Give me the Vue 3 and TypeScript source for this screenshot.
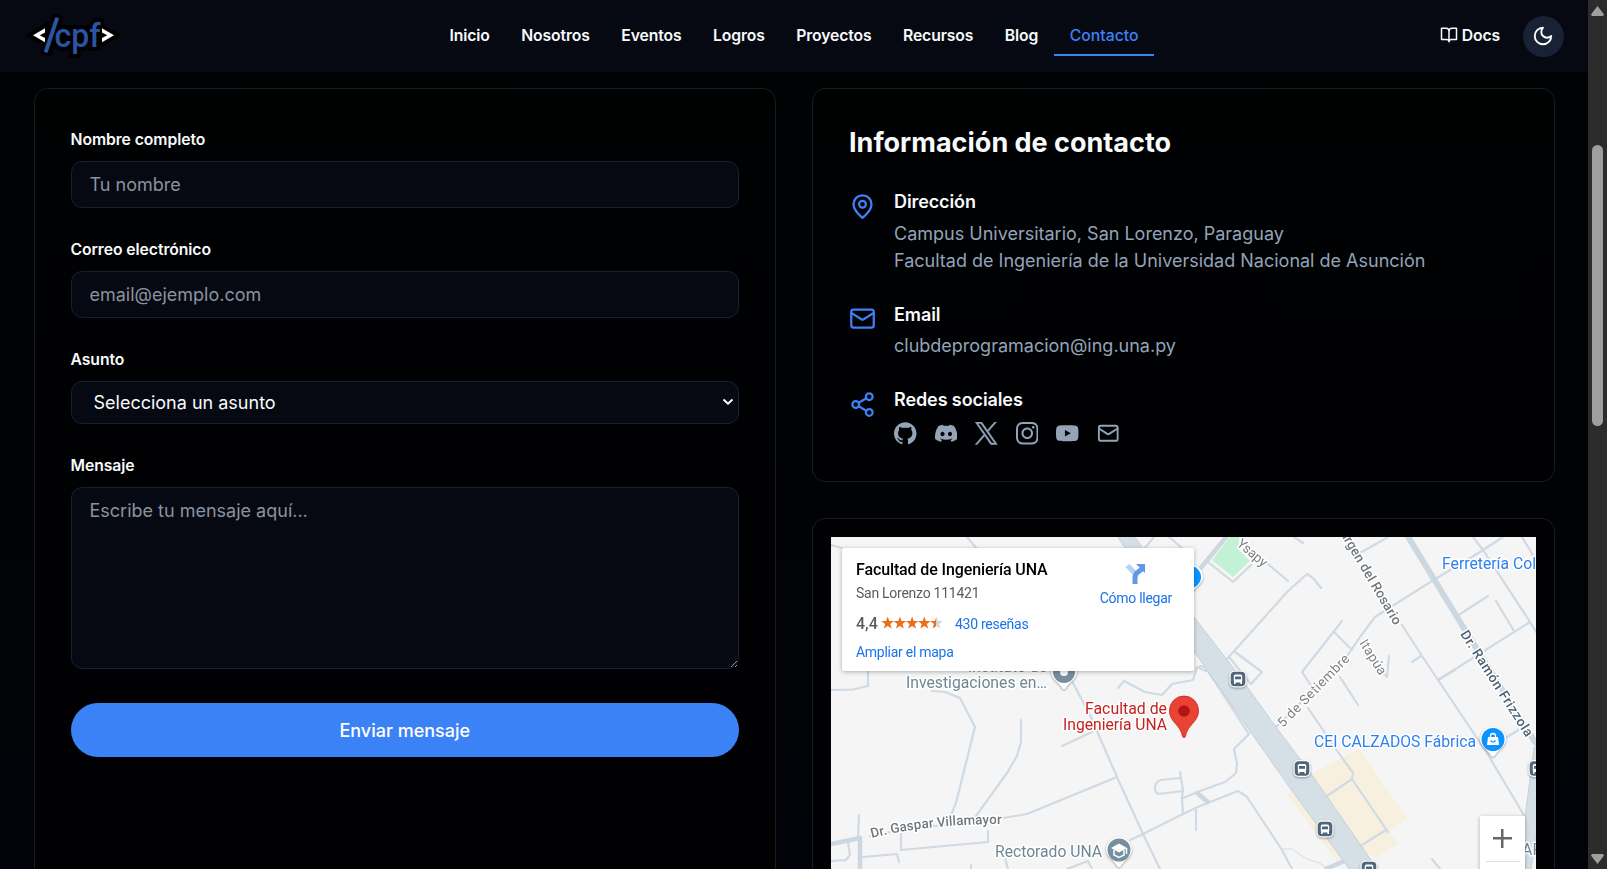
<script setup lang="ts">
import { ref } from 'vue'

interface Social {
  name: string
  path: string
}

const links: string[] = ['Inicio', 'Nosotros', 'Eventos', 'Logros', 'Proyectos', 'Recursos', 'Blog', 'Contacto']
const active = ref('Contacto')
const subject = ref('')

const socials: Social[] = [
  {
    name: 'GitHub',
    path: 'M12 .297c-6.63 0-12 5.373-12 12 0 5.303 3.438 9.8 8.205 11.385.6.113.82-.258.82-.577 0-.285-.01-1.04-.015-2.04-3.338.724-4.042-1.61-4.042-1.61C4.422 18.07 3.633 17.7 3.633 17.7c-1.087-.744.084-.729.084-.729 1.205.084 1.838 1.236 1.838 1.236 1.07 1.835 2.809 1.305 3.495.998.108-.776.417-1.305.76-1.605-2.665-.3-5.466-1.332-5.466-5.93 0-1.31.465-2.38 1.235-3.22-.135-.303-.54-1.523.105-3.176 0 0 1.005-.322 3.3 1.23.96-.267 1.98-.399 3-.405 1.02.006 2.04.138 3 .405 2.28-1.552 3.285-1.23 3.285-1.23.645 1.653.24 2.873.12 3.176.765.84 1.23 1.91 1.23 3.22 0 4.61-2.805 5.625-5.475 5.92.42.36.81 1.096.81 2.22 0 1.606-.015 2.896-.015 3.286 0 .315.21.69.825.57C20.565 22.092 24 17.592 24 12.297c0-6.627-5.373-12-12-12',
  },
  {
    name: 'Discord',
    path: 'M20.317 4.3698a19.7913 19.7913 0 00-4.8851-1.5152.0741.0741 0 00-.0785.0371c-.211.3753-.4447.8648-.6083 1.2495-1.8447-.2762-3.68-.2762-5.4868 0-.1636-.3933-.4058-.8742-.6177-1.2495a.077.077 0 00-.0785-.037 19.7363 19.7363 0 00-4.8852 1.515.0699.0699 0 00-.0321.0277C.5334 9.0458-.319 13.5799.0992 18.0578a.0824.0824 0 00.0312.0561c2.0528 1.5076 4.0413 2.4228 5.9929 3.0294a.0777.0777 0 00.0842-.0276c.4616-.6304.8731-1.2952 1.226-1.9942a.076.076 0 00-.0416-.1057c-.6528-.2476-1.2743-.5495-1.8722-.8923a.077.077 0 01-.0076-.1277c.1258-.0943.2517-.1923.3718-.2914a.0743.0743 0 01.0776-.0105c3.9278 1.7933 8.18 1.7933 12.0614 0a.0739.0739 0 01.0785.0095c.1202.099.246.1981.3728.2924a.077.077 0 01-.0066.1276 12.2986 12.2986 0 01-1.873.8914.0766.0766 0 00-.0407.1067c.3604.698.7719 1.3628 1.225 1.9932a.076.076 0 00.0842.0286c1.961-.6067 3.9495-1.5219 6.0023-3.0294a.077.077 0 00.0313-.0552c.5004-5.177-.8382-9.6739-3.5485-13.6604a.061.061 0 00-.0312-.0286zM8.02 15.3312c-1.1825 0-2.1569-1.0857-2.1569-2.419 0-1.3332.9555-2.4189 2.157-2.4189 1.2108 0 2.1757 1.0952 2.1568 2.419 0 1.3332-.9555 2.4189-2.1569 2.4189zm7.9748 0c-1.1825 0-2.1569-1.0857-2.1569-2.419 0-1.3332.9554-2.4189 2.1569-2.4189 1.2108 0 2.1757 1.0952 2.1568 2.419 0 1.3332-.946 2.4189-2.1568 2.4189Z',
  },
  {
    name: 'X',
    path: 'M14.234 10.162 22.977 0h-2.072l-7.591 8.824L7.251 0H.258l9.168 13.343L.258 24H2.33l8.016-9.318L16.749 24h6.993zm-2.837 3.299-.929-1.329L3.076 1.56h3.182l5.965 8.532.929 1.329 7.754 11.09h-3.182z',
  },
  {
    name: 'Instagram',
    path: 'M12 0C8.74 0 8.333.015 7.053.072 5.775.132 4.905.333 4.14.63c-.789.306-1.459.717-2.126 1.384S.935 3.35.63 4.14C.333 4.905.131 5.775.072 7.053.012 8.333 0 8.74 0 12s.015 3.667.072 4.947c.06 1.277.261 2.148.558 2.913.306.788.717 1.459 1.384 2.126.667.666 1.336 1.079 2.126 1.384.766.296 1.636.499 2.913.558C8.333 23.988 8.74 24 12 24s3.667-.015 4.947-.072c1.277-.06 2.148-.262 2.913-.558.788-.306 1.459-.718 2.126-1.384.666-.667 1.079-1.335 1.384-2.126.296-.765.499-1.636.558-2.913.06-1.28.072-1.687.072-4.947s-.015-3.667-.072-4.947c-.06-1.277-.262-2.149-.558-2.913-.306-.789-.718-1.459-1.384-2.126C21.319 1.347 20.651.935 19.86.63c-.765-.297-1.636-.499-2.913-.558C15.667.012 15.26 0 12 0zm0 2.16c3.203 0 3.585.016 4.85.071 1.17.055 1.805.249 2.227.415.562.217.96.477 1.382.896.419.42.679.819.896 1.381.164.422.36 1.057.413 2.227.057 1.266.07 1.646.07 4.85s-.015 3.585-.074 4.85c-.061 1.17-.256 1.805-.421 2.227-.224.562-.479.96-.899 1.382-.419.419-.824.679-1.38.896-.42.164-1.065.36-2.235.413-1.274.057-1.649.07-4.859.07-3.211 0-3.586-.015-4.859-.074-1.171-.061-1.816-.256-2.236-.421-.569-.224-.96-.479-1.379-.899-.421-.419-.69-.824-.9-1.38-.165-.42-.359-1.065-.42-2.235-.045-1.26-.061-1.649-.061-4.844 0-3.196.016-3.586.061-4.861.061-1.17.255-1.814.42-2.234.21-.57.479-.96.9-1.381.419-.419.81-.689 1.379-.898.42-.166 1.051-.361 2.221-.421 1.275-.045 1.65-.06 4.859-.06l.045.03zm0 3.678c-3.405 0-6.162 2.76-6.162 6.162 0 3.405 2.76 6.162 6.162 6.162 3.405 0 6.162-2.76 6.162-6.162 0-3.405-2.76-6.162-6.162-6.162zM12 16c-2.21 0-4-1.79-4-4s1.79-4 4-4 4 1.79 4 4-1.79 4-4 4zm7.846-10.405c0 .795-.646 1.44-1.44 1.44-.795 0-1.44-.646-1.44-1.44 0-.794.646-1.439 1.44-1.439.793-.001 1.44.645 1.44 1.439z',
  },
  {
    name: 'YouTube',
    path: 'M23.498 6.186a3.016 3.016 0 0 0-2.122-2.136C19.505 3.545 12 3.545 12 3.545s-7.505 0-9.377.505A3.017 3.017 0 0 0 .502 6.186C0 8.07 0 12 0 12s0 3.93.502 5.814a3.016 3.016 0 0 0 2.122 2.136c1.871.505 9.376.505 9.376.505s7.505 0 9.377-.505a3.015 3.015 0 0 0 2.122-2.136C24 15.93 24 12 24 12s0-3.93-.502-5.814zM9.545 15.568V8.432L15.818 12l-6.273 3.568z',
  },
]

const streets: string[] = [
  'M831 545 842 548',
  'M967 537 977 549',
  'M868 668V686L853 689.5 831 690',
  'M932 691 945 692 960 698 975 727 956 803 951 815',
  'M1021 720V742L1017 756 1007 773 976 816',
  'M870 836 901 830 1003 818 1027 814 1117 777',
  'M859 815 858 838',
  'M848 843 850 855 846 860 831 861',
  'M863 857 897 854 899 862',
  'M901 834V850L988 842V831',
  'M971 865V869',
  'M1073 683 1090 715 1117 777 1143 834 1160 869',
  'M1062 746 1092 732',
  'M1130 840 1143 834 1183 814 1200 806 1238 791 1247 797 1282 850 1292 869',
  'M1183 798 1200 791 1225 782 1236 773 1237 764 1234 749 1249 734 1243 725 1215 682 1205 667 1200 666',
  'M1180 772 1183 790 1182 798 1183 814',
  'M1180 778 1161 780Q1155 782 1155 787T1158 794L1183 791',
  'M1196 810V830',
  'M1118 688 1124 681 1145 692 1162 695 1172 684 1193 680 1197 667 1206 671',
  'M1145 548 1154 537',
  'M1169 537 1190 555',
  'M1208 562 1233 582 1251 565',
  'M1268 564 1288 581',
  'M1294 537 1303 543',
  'M1321 588 1313 578 1307 574 1288 591 1227 659',
  'M1235 652 1262 672 1251 684 1229 657',
  'M1342 621 1302 672 1314 690',
  'M1308 708 1338 752 1353 773 1352 779 1388 832',
  'M1334 632 1352 650',
  'M1503 537 1480 552 1432 581 1375 617 1360 637 1345 659 1276 727',
  'M1360 553 1388 537',
  'M1457 616 1488 596',
  'M1496 601 1514 631',
  'M1473 537 1483 550 1530 622 1536 632',
  'M1522 537 1533 555',
  'M1530 622 1438 680',
  'M1402 625 1422 656 1438 680 1487 753 1525 817',
  'M1412 662 1421 656',
  'M1389 656 1387 677 1383 673',
  'M1340 677 1358 705',
  'M1455 670 1438 680',
  'M1507 737 1520 729',
  'M1327 796 1352 779',
  'M1362 845 1386 830',
  'M1432 859 1440 869',
  'M1067 869 1088 861 1092 869',
  'M1005 858 1008 869',
]

const avenues: string[] = [
  'M831 844 860 838V869',
  'M1196 792 1209 803',
  'M1200 569 1227 536',
  'M1325 869 1352 858',
]

const busStops: [number, number][] = [
  [1238, 679],
  [1302, 768.5],
  [1325, 829],
  [1369, 869],
  [1537, 768.5],
]
</script>

<template>
  <div class="page">
    <div class="site">
      <header class="topbar">
        <svg class="logo" viewBox="0 0 100 56">
          <g class="logo-shadow">
            <path d="M19 20.300 7 27.300 19 34.300ZM76 20.300 88 27.300 76 34.300Z" />
            <path class="slash-shadow" d="M32 7 20 47" />
            <text x="28.500" y="39" textLength="46" lengthAdjust="spacingAndGlyphs">cpf</text>
          </g>
          <path class="bracket" d="M19 20.300 7 27.300 19 34.300V30L13.800 27.300 19 24.600ZM76 20.300 88 27.300 76 34.300V30L81.200 27.300 76 24.600Z" />
          <path class="slash" d="M31.200 9.700 19.600 44.300" />
          <text class="mark" x="28.500" y="39" textLength="46" lengthAdjust="spacingAndGlyphs">cpf</text>
        </svg>
        <nav class="nav">
          <a v-for="l in links" :key="l" class="nav-link" :class="{ active: l === active }" @click="active = l">{{ l }}</a>
        </nav>
        <div class="actions">
          <a class="docs">
            <svg class="line book" viewBox="0 0 24 24"><path d="M2 3h6a4 4 0 0 1 4 4v14a3 3 0 0 0-3-3H2zM22 3h-6a4 4 0 0 0-4 4v14a3 3 0 0 1 3-3h7z" /></svg>
            <span>Docs</span>
          </a>
          <button class="theme" type="button" aria-label="Tema">
            <svg class="line" viewBox="0 0 24 24"><path d="M12 3a6 6 0 0 0 9 9 9 9 0 1 1-9-9Z" /></svg>
          </button>
        </div>
      </header>

      <main class="content">
        <form class="card form" @submit.prevent>
          <div class="field">
            <label for="name">Nombre completo</label>
            <input id="name" type="text" placeholder="Tu nombre" />
          </div>
          <div class="field">
            <label for="email">Correo electrónico</label>
            <input id="email" type="email" placeholder="email@ejemplo.com" />
          </div>
          <div class="field">
            <label for="subject">Asunto</label>
            <div class="select">
              <select id="subject" v-model="subject">
                <option value="">Selecciona un asunto</option>
              </select>
              <svg class="chevron" viewBox="0 0 12 8"><path d="M1.500 1.500 6 5.700l4.500-4.200" /></svg>
            </div>
          </div>
          <div class="field message">
            <label for="message">Mensaje</label>
            <textarea id="message" placeholder="Escribe tu mensaje aquí..."></textarea>
          </div>
          <button class="submit" type="submit">Enviar mensaje</button>
        </form>

        <div class="side">
          <section class="card info">
            <h2>Información de contacto</h2>
            <div class="row">
              <svg class="line row-icon" viewBox="0 0 24 24"><path d="M20 10c0 6-8 12-8 12s-8-6-8-12a8 8 0 0 1 16 0Z" /><circle cx="12" cy="10" r="3" /></svg>
              <div>
                <h3>Dirección</h3>
                <p>Campus Universitario, San Lorenzo, Paraguay<br />Facultad de Ingeniería de la Universidad Nacional de Asunción</p>
              </div>
            </div>
            <div class="row">
              <svg class="line row-icon" viewBox="0 0 24 24"><rect x="2" y="4" width="20" height="16" rx="2" /><path d="m22 7-8.970 5.700a1.940 1.940 0 0 1-2.060 0L2 7" /></svg>
              <div>
                <h3>Email</h3>
                <p>clubdeprogramacion@ing.una.py</p>
              </div>
            </div>
            <div class="row">
              <svg class="line row-icon" viewBox="0 0 24 24"><circle cx="18" cy="5" r="3" /><circle cx="6" cy="12" r="3" /><circle cx="18" cy="19" r="3" /><path d="m8.590 13.510 6.830 3.980M15.410 6.510l-6.820 3.980" /></svg>
              <div>
                <h3>Redes sociales</h3>
                <div class="socials">
                  <svg v-for="s in socials" :key="s.name" viewBox="0 0 24 24" :class="{ heavy: s.name === 'X' }" :aria-label="s.name"><path :d="s.path" /></svg>
                  <svg class="line" viewBox="0 0 24 24"><rect x="2" y="4" width="20" height="16" rx="2" /><path d="m22 7-8.970 5.700a1.940 1.940 0 0 1-2.060 0L2 7" /></svg>
                </div>
              </div>
            </div>
          </section>

          <section class="card map-card">
            <div class="map">
              <svg class="map-canvas" viewBox="831 537 705 332">
                <defs>
                  <g id="bus">
                    <rect x="-8.500" y="-8.500" width="17" height="17" rx="5" fill="#fff" />
                    <rect x="-7.300" y="-7.300" width="14.600" height="14.600" rx="4" fill="#4f667a" />
                    <rect x="-4.200" y="-4.500" width="8.400" height="8" rx="1.500" fill="#fff" />
                    <path d="M-3-2.500H3V.3H-3Z" fill="#4f667a" />
                    <path d="M-3.200 3v2M3.200 3v2" stroke="#fff" stroke-width="1.600" />
                  </g>
                  <path id="pin" d="M0-13A13 13 0 0 1 13 0C13 7 5 10 1.500 16.500Q0 18-1.500 16.500C-5 10-13 7-13 0A13 13 0 0 1 0-13Z" />
                </defs>
                <path class="park" d="M1230 537 1212 560 1233 577 1250 561 1239 550 1239 537Z" />
                <path class="zone" d="M1359 749 1407 818 1389 832 1398 844 1377 857 1367 855 1312 774 1328 765ZM1287 795 1297 788 1349 857 1338 862Z" />
                <path class="street faint" d="M1282 849 1292 849 1307 859 1320 863 1327 869" />
                <path v-for="d in streets" :key="d" class="street" :d="d" />
                <path v-for="d in avenues" :key="d" class="street avenue" :d="d" />
                <path class="street ramon" d="M1407 535 1465 630 1535 742" />
                <path class="highway" d="M1117 536 1125 548 1170 617 1207 670 1290 788 1350 870H1378L1312 775 1276 727 1235 670 1194 617 1143 548 1134 536Z" />
                <path class="highway" d="M1537 743 1534 748 1525 817V870H1531L1537 830Z" />

                <g class="shadowed">
                  <use v-for="([x, y], i) in busStops" :key="i" href="#bus" :transform="`translate(${x} ${y})`" />
                </g>

                <g class="shadowed">
                  <use href="#pin" x="1190" y="577" fill="#fff" />
                  <use href="#pin" x="1064" y="672" fill="#fff" />
                  <use href="#pin" x="1119" y="850" fill="#fff" />
                  <use href="#pin" x="1493" y="739.500" fill="#fff" />
                </g>
                <circle cx="1190" cy="577" r="11" fill="#0b94ff" />
                <circle cx="1064" cy="672" r="7.500" fill="none" stroke="#758f9e" stroke-width="7" />
                <circle cx="1119" cy="850" r="11.500" fill="#758f9e" />
                <path d="m1111 848 8-4.500 8 4.500-8 4.500Z" fill="#fff" />
                <path d="M1114 850v5l5 2.500 5-2.500v-5M1126.500 848v6" fill="none" stroke="#fff" stroke-width="1.500" />
                <circle cx="1493" cy="739.500" r="11.500" fill="#0b94ff" />
                <path d="M1488 737h10l1 8h-12Z" fill="#fff" />
                <path d="M1490.500 738v-2a2.500 2.500 0 0 1 5 0v2" fill="none" stroke="#fff" stroke-width="1.300" />
                <path d="M1490.500 740.500q2.500 3 5 0" fill="none" stroke="#0b94ff" stroke-width="1.200" />
                <path d="M1184 696A14.500 14.500 0 0 1 1198.500 711C1198.500 722 1187 725 1185.500 736.500Q1184 739 1182.500 736.500C1181 725 1169.500 722 1169.500 711A14.500 14.500 0 0 1 1184 696Z" fill="#ea4335" stroke="#c5221f" stroke-width=".8" />
                <circle cx="1184" cy="711" r="5.800" fill="#b31412" />

                <g class="place">
                  <text x="968" y="672" textLength="79" lengthAdjust="spacingAndGlyphs">Instituto de</text>
                  <text x="906" y="688" textLength="141" lengthAdjust="spacingAndGlyphs">Investigaciones en…</text>
                  <text x="995" y="857" textLength="107" lengthAdjust="spacingAndGlyphs">Rectorado UNA</text>
                  <text x="1522" y="855">AP</text>
                </g>
                <g class="place blue">
                  <text x="1442" y="569" textLength="94" lengthAdjust="spacingAndGlyphs">Ferretería Col</text>
                  <text x="1314" y="747" textLength="162" lengthAdjust="spacingAndGlyphs">CEI CALZADOS Fábrica</text>
                </g>
                <g class="place red">
                  <text x="1085" y="714" textLength="82" lengthAdjust="spacingAndGlyphs">Facultad de</text>
                  <text x="1063" y="730" textLength="104" lengthAdjust="spacingAndGlyphs">Ingeniería UNA</text>
                </g>
                <path id="gaspar" d="M872 838Q925 824 1003 824" fill="none" />
                <g class="road-name">
                  <text class="dark-gray"><textPath href="#gaspar" textLength="131">Dr. Gaspar Villamayor</textPath></text>
                  <text transform="translate(1236 545) rotate(40)" textLength="35">Ysapy</text>
                  <text class="dark-gray" transform="translate(1342 537) rotate(59.500)" textLength="103">irgen del Rosario</text>
                  <text transform="translate(1283 728) rotate(-45.500)" textLength="96">5 de Setiembre</text>
                  <text transform="translate(1359 643) rotate(58)" textLength="39">Itapúa</text>
                  <text class="slate" transform="translate(1460 634) rotate(57.500)" textLength="123">Dr. Ramón Frizzola</text>
                </g>
              </svg>

              <div class="place-card">
                <div>
                  <div class="place-name">Facultad de Ingeniería UNA</div>
                  <div class="place-address">San Lorenzo 111421</div>
                  <div class="rating">
                    <span class="score">4,4</span>
                    <svg class="stars" viewBox="0 0 60 12">
                      <defs>
                        <linearGradient id="half"><stop offset=".5" stop-color="#e7711b" /><stop offset=".5" stop-color="#d5d5d5" /></linearGradient>
                        <path id="star" d="M5.700-.5 7.300 4 12 4.100 8.300 7 9.600 11.500 5.700 8.900 1.800 11.500 3.100 7-.6 4.100 4.100 4Z" />
                      </defs>
                      <use v-for="n in 4" :key="n" href="#star" :x="(n - 1) * 12.200" fill="#e7711b" />
                      <use href="#star" x="48.800" fill="url(#half)" />
                    </svg>
                    <a>430 reseñas</a>
                  </div>
                  <a class="enlarge">Ampliar el mapa</a>
                </div>
                <div class="directions">
                  <svg viewBox="0 0 22 22"><path d="M2.500 2.500 10 10.500" stroke="#b6d0f6" stroke-width="5" /><path d="M10 21v-6q0-4 3-6l4-3" fill="none" stroke="#6199e8" stroke-width="5" /><path d="M11 1h9v9Z" fill="#6199e8" /></svg>
                  <a>Cómo llegar</a>
                </div>
              </div>
              <div class="zoom-control"><span class="plus"></span></div>
            </div>
          </section>
        </div>
      </main>
    </div>

    <div class="scrollbar">
      <span class="arrow up"></span>
      <span class="thumb"></span>
      <span class="arrow down"></span>
    </div>
  </div>
</template>

<style>
body {
  margin: 0;
  background: #010204;
  overflow: hidden;
}
</style>

<style scoped>
* {
  box-sizing: border-box;
}
.page {
  display: flex;
  height: 869px;
  overflow: hidden;
  color: #f8fafc;
  font: 18px/27px Inter, sans-serif;
  color-scheme: dark;
}
.site {
  width: 1588px;
  background: linear-gradient(#010203, #020308);
}
.topbar {
  display: grid;
  grid-template-columns: 1fr auto 1fr;
  align-items: center;
  height: 72px;
  padding: 0 24px 0 26px;
  background: #060912;
}
.logo {
  width: 100px;
  height: 56px;
  overflow: visible;
}
.logo text {
  font: 500 34px Roboto, sans-serif;
}
.logo-shadow {
  fill: #000;
  stroke: #000;
  stroke-width: 8;
}
.slash-shadow {
  stroke-width: 11;
}
.bracket {
  fill: #fff;
}
.slash {
  fill: none;
  stroke: #2b54a3;
  stroke-width: 4;
}
.mark {
  fill: #2b54a3;
}
.nav {
  display: flex;
  margin-right: 2px;
}
.nav-link {
  height: 40px;
  padding: 9px 15.750px 0;
  border-bottom: 2px solid transparent;
  font-size: 15.750px;
  font-weight: 600;
  letter-spacing: -0.130px;
  line-height: 22.500px;
}
.nav-link.active {
  color: #3b82f6;
  border-color: #3b82f6;
  font-weight: 500;
  letter-spacing: 0;
}
.actions {
  display: flex;
  align-items: center;
  justify-content: flex-end;
  gap: 23px;
}
.docs {
  display: flex;
  align-items: center;
  gap: 4px;
  margin-bottom: 2px;
  font-size: 15.750px;
  font-weight: 600;
  letter-spacing: -0.130px;
}
.line {
  fill: none;
  stroke: currentColor;
  stroke-width: 2;
  stroke-linecap: round;
  stroke-linejoin: round;
}
.book {
  width: 18px;
  height: 18px;
}
.theme {
  display: grid;
  place-items: center;
  width: 41px;
  height: 41px;
  padding: 0 1px 0 0;
  border: 0;
  border-radius: 50%;
  background: #182234;
  color: #fff;
}
.theme svg {
  width: 22px;
  height: 22px;
}
.content {
  display: grid;
  grid-template-columns: 1fr 1fr;
  gap: 36px;
  height: 1000px;
  padding: 16px 33px 0 34px;
}
.card {
  border: 1px solid #1a1c1f;
  border-radius: 13.500px;
  background: rgba(0, 0, 0, 0.4);
}
.form {
  padding: 36px 36px 36px 35.500px;
}
.field {
  display: flex;
  flex-direction: column;
  gap: 9px;
  margin-bottom: 27px;
}
.field label {
  height: 27px;
  font-size: 15.750px;
  font-weight: 600;
  letter-spacing: -0.080px;
  line-height: 30px;
}
.field input,
.field select,
.field textarea {
  display: block;
  width: 100%;
  margin: 0;
  padding: 9px 18px;
  border: 1px solid #172033;
  border-radius: 11px;
  outline: 0;
  background: #060912;
  color: #f8fafc;
  font: 18px/27px Inter, sans-serif;
}
.field input {
  height: 47px;
}
.field select {
  height: 43px;
  padding: 0 18px 0 22px;
  appearance: none;
}
.select {
  position: relative;
}
.chevron {
  position: absolute;
  top: 17px;
  right: 5px;
  width: 12px;
  height: 8px;
  fill: none;
  stroke: #fff;
  stroke-width: 2;
  pointer-events: none;
}
.field textarea {
  height: 182px;
  resize: vertical;
}
.field ::placeholder {
  color: #8b929e;
  opacity: 1;
}
.message {
  margin-bottom: 34px;
}
.submit {
  width: 100%;
  height: 54px;
  border: 0;
  border-radius: 27px;
  background: #3b82f6;
  color: #fff;
  font: 500 18px/27px Inter, sans-serif;
}
.side {
  display: flex;
  flex-direction: column;
  gap: 36px;
}
.info {
  padding: 36px;
}
h2 {
  margin: 0 0 27px;
  font-size: 27px;
  font-weight: 700;
  line-height: 36px;
}
.row {
  display: flex;
  gap: 18px;
  margin-bottom: 27px;
}
.row:last-child {
  margin-bottom: 0;
}
.row-icon {
  flex: none;
  width: 27px;
  height: 27px;
  margin-top: 4.500px;
  color: #3b82f6;
}
h3 {
  margin: 0;
  font-size: 18px;
  font-weight: 600;
  letter-spacing: -0.100px;
  line-height: 27px;
}
p {
  margin: 4.500px 0 0;
  color: #94a3b8;
}
.socials {
  display: flex;
  gap: 18px;
  margin-top: 9px;
  color: #94a3b8;
}
.socials svg {
  width: 22.500px;
  height: 22.500px;
}
.socials svg:not(.line) {
  fill: currentColor;
}
.socials .heavy {
  stroke: currentColor;
  stroke-width: 0.600;
}
.map-card {
  flex: 1;
  padding: 18px 18px 0;
}
.map {
  position: relative;
  width: 705px;
  height: 333px;
  background: #f5f5f5;
  overflow: hidden;
  font-family: Roboto, sans-serif;
}
.map-canvas {
  display: block;
  width: 705px;
  height: 332px;
}
.street {
  fill: none;
  stroke: #cfdae4;
  stroke-width: 2.200;
  stroke-linecap: round;
  stroke-linejoin: round;
}
.faint {
  stroke: #e3e4e5;
  stroke-width: 1.500;
}
.avenue {
  stroke: #ccd7df;
  stroke-width: 4.500;
  stroke-linecap: butt;
}
.ramon {
  stroke: #ccd7df;
  stroke-width: 6;
}
.highway {
  fill: #d5dfe6;
  stroke: #bfccd6;
  stroke-width: 0.800;
}
.park {
  fill: #c3f1d5;
}
.zone {
  fill: #f7f0df;
}
.shadowed {
  filter: drop-shadow(0 1px 1px rgba(0, 0, 0, 0.35));
}
.place text,
.road-name text {
  paint-order: stroke;
  stroke: #fff;
  stroke-width: 3px;
  stroke-linejoin: round;
}
.place {
  fill: #6e8793;
  font-size: 16px;
}
.blue {
  fill: #2e80f0;
}
.red {
  fill: #c5221f;
}
.road-name {
  fill: #7b8085;
  font-size: 13.500px;
}
.road-name .dark-gray {
  fill: #6f767c;
  font-weight: 500;
}
.road-name .slate {
  fill: #4b6072;
  font-weight: 500;
}
.place-card {
  position: absolute;
  top: 11px;
  left: 11px;
  display: flex;
  justify-content: space-between;
  width: 352px;
  height: 123px;
  padding: 12px 22px 0 14px;
  border-radius: 2px;
  background: #fff;
  box-shadow: 0 1px 4px rgba(0, 0, 0, 0.3);
  color: #5b5b5b;
  font-size: 14px;
  letter-spacing: -0.270px;
  line-height: 20px;
}
.place-card a {
  color: #1a73e8;
}
.place-name {
  color: #000;
  font-size: 16px;
  font-weight: 500;
  letter-spacing: -0.120px;
}
.place-address {
  margin-top: 3px;
  letter-spacing: -0.260px;
}
.rating {
  display: flex;
  align-items: center;
  margin: 11px 0 8px;
}
.rating a {
  margin-left: 13px;
}
.score {
  width: 26px;
  font-size: 16px;
  font-weight: 500;
  letter-spacing: 0;
}
.stars {
  width: 60px;
  height: 12px;
  margin-top: -2px;
  overflow: visible;
}
.directions {
  display: flex;
  flex-direction: column;
  align-items: center;
  padding-top: 3px;
}
.directions svg {
  width: 22px;
  height: 22px;
  margin-bottom: 3px;
}
.zoom-control {
  position: absolute;
  top: 279px;
  right: 11px;
  width: 45px;
  height: 90px;
  background: #fff;
  box-shadow: 0 1px 4px rgba(0, 0, 0, 0.3);
}
.zoom-control::after {
  content: '';
  display: block;
  width: 34px;
  margin: 0 auto;
  border-top: 1px solid #dedede;
}
.plus {
  display: block;
  width: 19px;
  height: 19px;
  margin: 13px auto;
  background: linear-gradient(#666, #666) center / 19px 2.500px no-repeat, linear-gradient(#666, #666) center / 2.500px 19px no-repeat;
}
.scrollbar {
  display: flex;
  flex-direction: column;
  align-items: center;
  width: 19px;
  height: 869px;
  background: #2c2c2c;
}
.thumb {
  width: 11px;
  height: 281px;
  margin: 129px 0 auto;
  border-radius: 6px;
  background: #9f9f9f;
}
.arrow {
  width: 13px;
  height: 10px;
  background: #9f9f9f;
}
.up {
  margin-top: 6px;
  clip-path: polygon(50% 0, 100% 85%, 92% 100%, 8% 100%, 0 85%);
}
.down {
  margin-bottom: 5px;
  clip-path: polygon(50% 100%, 100% 15%, 92% 0, 8% 0, 0 15%);
}
</style>
